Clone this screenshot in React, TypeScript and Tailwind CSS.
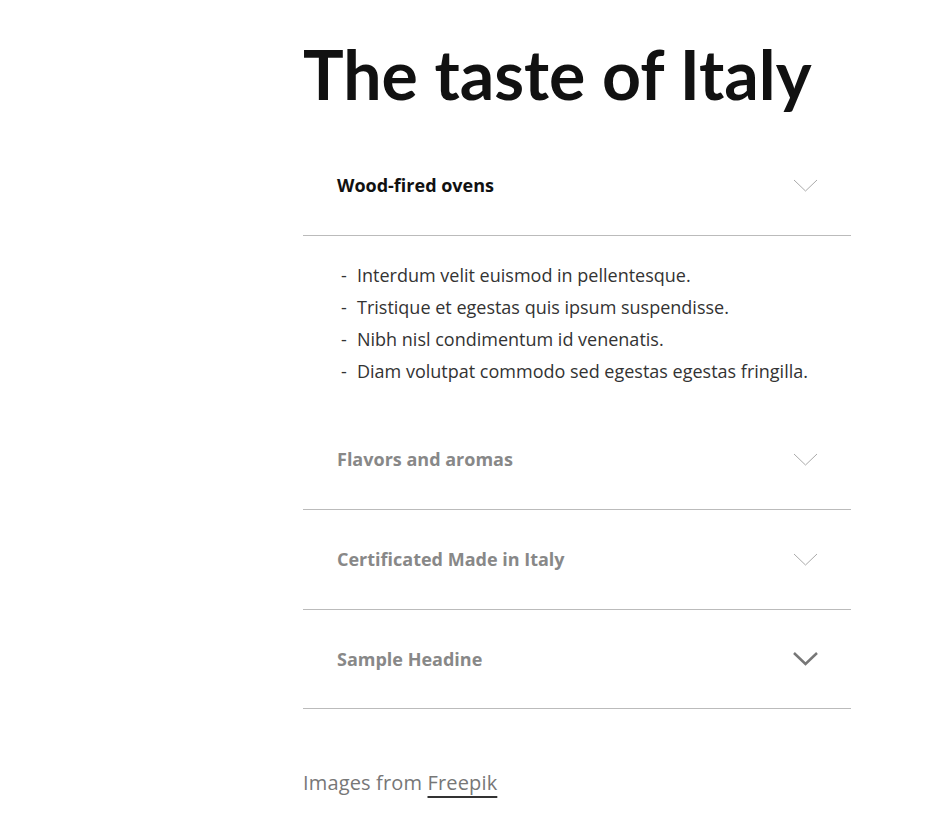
import { useState } from 'react'

const items = [
  {
    title: 'Wood-fired ovens',
    body: [
      'Interdum velit euismod in pellentesque.',
      'Tristique et egestas quis ipsum suspendisse.',
      'Nibh nisl condimentum id venenatis.',
      'Diam volutpat commodo sed egestas egestas fringilla.',
    ],
  },
  { title: 'Flavors and aromas', body: [] },
  { title: 'Certificated Made in Italy', body: [] },
  { title: 'Sample Headine', body: [] },
]

function Chevron({ bold }: { bold?: boolean }) {
  return (
    <svg width="25" height="14" viewBox="0 0 25 14" fill="none">
      <path
        d="M1 1 L12.5 12 L24 1"
        stroke={bold ? '#777' : '#aaa'}
        strokeWidth={bold ? 2.5 : 1}
      />
    </svg>
  )
}

export default function App() {
  const [open, setOpen] = useState(0)

  return (
    <div className="min-h-[840px] bg-white font-['Open_Sans',sans-serif]">
      <div className="ml-[303px] w-[548px] pt-[26px]">
        <h1 className="font-['Lato',sans-serif] text-[68px] leading-[96px] font-bold text-[#111] whitespace-nowrap">
          The taste of Italy
        </h1>

        <div className="mt-[14px]">
          {items.map((item, i) => (
            <div key={item.title}>
              <button
                onClick={() => setOpen(open === i ? -1 : i)}
                className={
                  'w-full flex items-center justify-between pl-[34px] pr-[33px] border-b border-[#bbb] text-left ' +
                  (i === items.length - 1 ? 'h-[99px]' : 'h-[100px]')
                }
              >
                <span
                  className={
                    'text-[18px] font-bold ' +
                    (open === i ? 'text-[#111]' : 'text-[#888]')
                  }
                >
                  {item.title}
                </span>
                <Chevron bold={i === items.length - 1} />
              </button>
              {open === i && item.body.length > 0 && (
                <ul className="pl-[38px] pt-[23px] pb-[23px] text-[18px] leading-[32px] text-[#333]">
                  {item.body.map((line) => (
                    <li key={line} className="flex">
                      <span className="w-[16px]">-</span>
                      <span>{line}</span>
                    </li>
                  ))}
                </ul>
              )}
            </div>
          ))}
        </div>

        <p className="mt-[59px] text-[20px] tracking-[0.15px] text-[#777]">
          Images from{' '}
          <a href="#" className="underline underline-offset-[6px] decoration-[#333]">
            Freepik
          </a>
        </p>
      </div>
    </div>
  )
}
